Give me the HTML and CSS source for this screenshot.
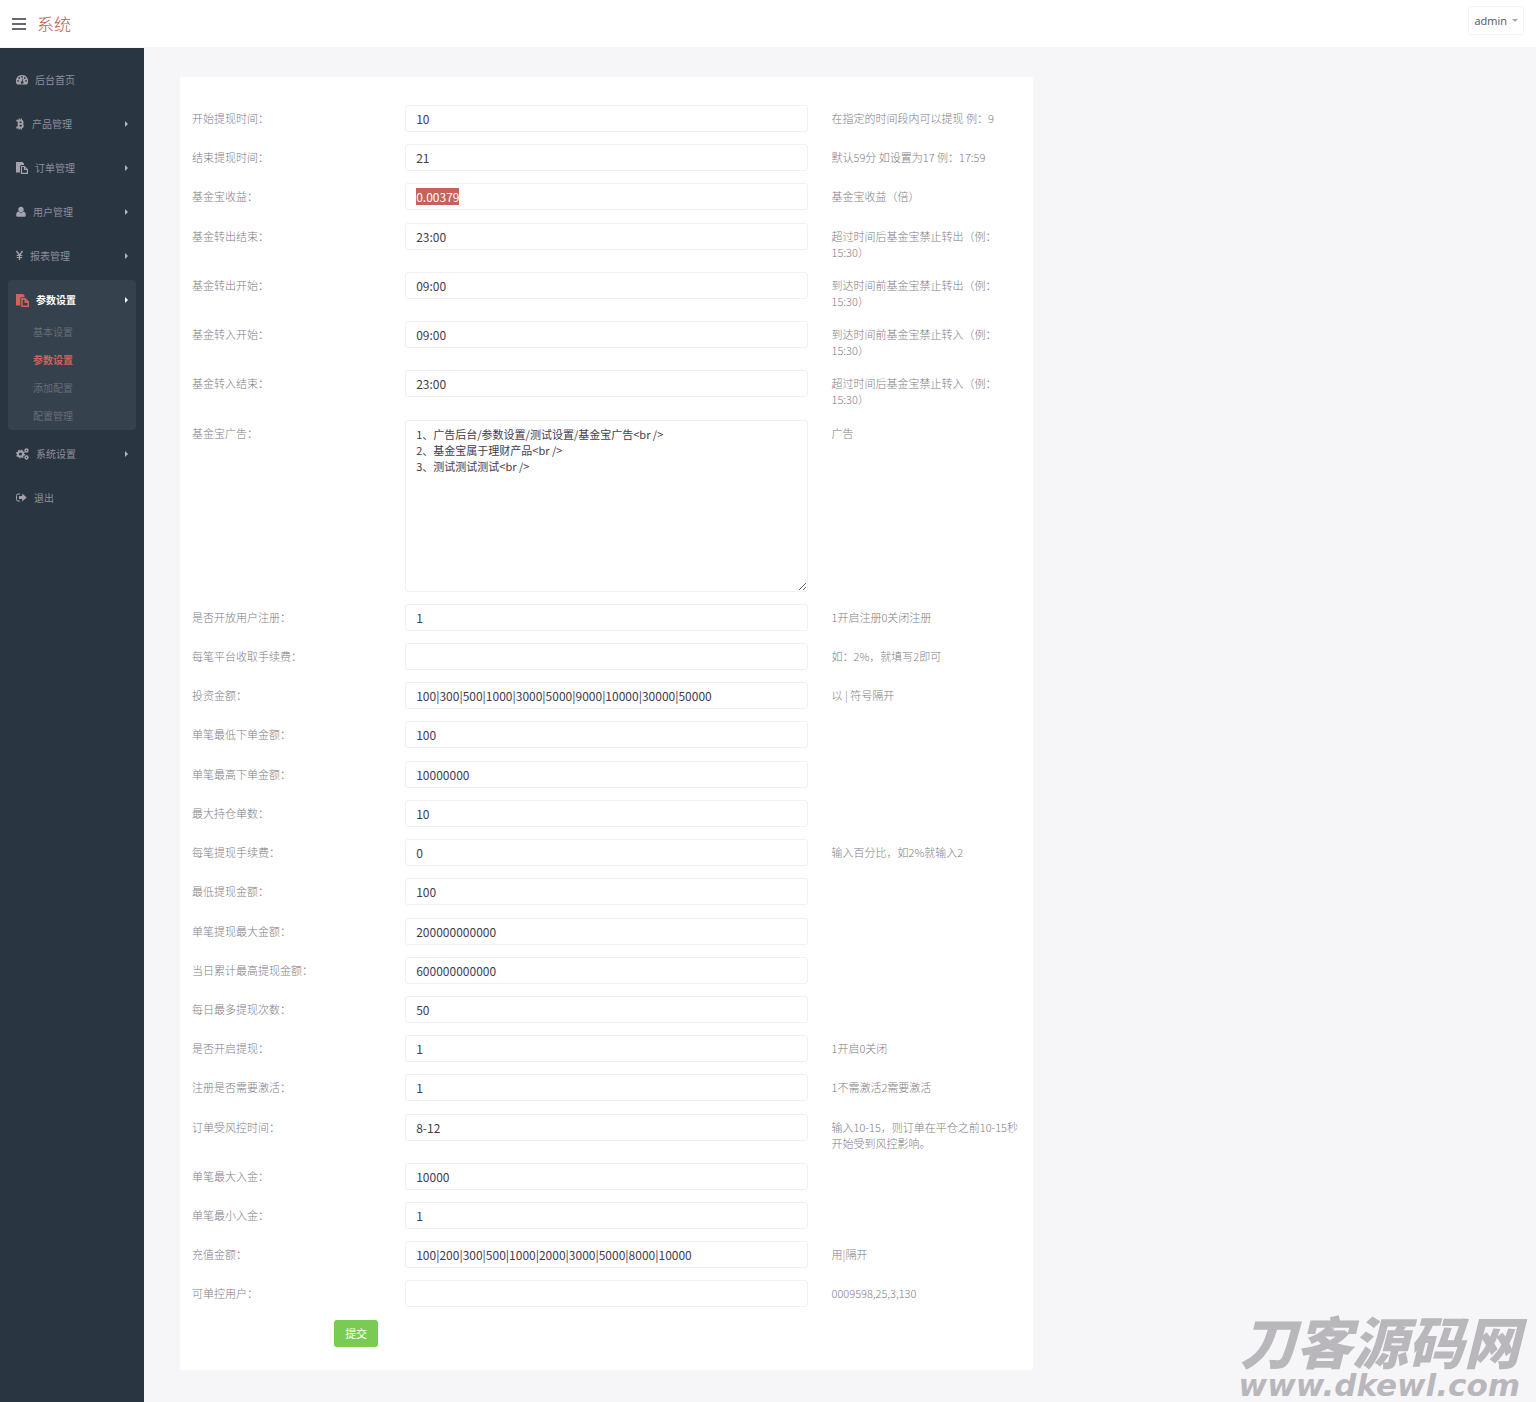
FILE: index.html
```html
<!DOCTYPE html>
<html lang="zh-CN">
<head>
    <meta charset="UTF-8">
    <meta name="viewport" content="width=device-width, initial-scale=1.0">
    <title>参数设置</title>
    <link rel="stylesheet" href="styles.css">
</head>
<body>
    <header class="header">
        <button class="menu-toggle" type="button" aria-label="菜单">
            <svg width="14" height="12" viewBox="0 0 14 12"><path d="M0 1h14M0 6h14M0 11h14" stroke="currentColor" stroke-width="2"/></svg>
        </button>
        <a class="logo" href="#">系统</a>
        <button class="user-menu" type="button">admin <span class="caret-down"></span></button>
    </header>

    <div class="layout">
        <nav class="sidebar">
            <ul class="menu">
                <li class="menu-item">
                    <a href="#">
                        <svg width="12" height="12" viewBox="0 0 12 12"><path fill="currentColor" fill-rule="evenodd" d="M6 1a6 6 0 0 0-5 9.500h10A6 6 0 0 0 6 1zM2 6a.8.8 0 1 1 0 1.700.8.8 0 0 1 0-1.700zM3.300 3.100a.8.8 0 1 1 0 1.700.8.8 0 0 1 0-1.700zM6 2a.8.8 0 1 1 0 1.700A.8.8 0 0 1 6 2zM8.800 3.100a.8.8 0 1 1 0 1.700.8.8 0 0 1 0-1.700zM10 6a.8.8 0 1 1 0 1.700A.8.8 0 0 1 10 6zM6.600 4.500l.7.2-.6 2.600a1.300 1.300 0 1 1-.8-.1z"/></svg>
                        后台首页
                    </a>
                </li>
                <li class="menu-item">
                    <a href="#">
                        <svg width="9" height="12" viewBox="0 0 9 12"><path fill="none" stroke="currentColor" stroke-width="1.8" d="M.3 2.600H5a1.600 1.600 0 0 1 0 3.300H2.600M5 5.900a1.800 1.800 0 0 1 0 3.600H.3M2.600 2.500v7"/><path stroke="currentColor" stroke-width="1.200" d="M3.300 .5v2M5.400 .5v2M3.300 9.500v2M5.400 9.500v2"/></svg>
                        产品管理
                        <span class="arrow"></span>
                    </a>
                </li>
                <li class="menu-item">
                    <a href="#">
                        <svg width="12" height="12" viewBox="0 0 12 12"><path fill="currentColor" d="M0 0h6.500L8 1.500V3H5.500A1.500 1.500 0 0 0 4 4.500v6H0z"/><path fill="none" stroke="currentColor" stroke-width="1.200" d="M5.500 4.500h3l2.900 2.900v4H5.500zM8.500 4.500v3h3"/></svg>
                        订单管理
                        <span class="arrow"></span>
                    </a>
                </li>
                <li class="menu-item">
                    <a href="#">
                        <svg width="10" height="12" viewBox="0 0 10 12"><circle cx="5" cy="3.500" r="2.700" fill="currentColor"/><path fill="currentColor" d="M2.400 5.500C.7 5.700.2 7.300.2 9.200c0 1 .6 1.600 1.500 1.600h6.600c.9 0 1.500-.6 1.500-1.600 0-1.900-.5-3.500-2.200-3.700a3.500 3.500 0 0 1-5.200 0z"/></svg>
                        用户管理
                        <span class="arrow"></span>
                    </a>
                </li>
                <li class="menu-item">
                    <a href="#">
                        <svg width="7" height="12" viewBox="0 0 7 12"><path fill="none" stroke="currentColor" stroke-width="1.400" d="M.5 1l3 4.500L6.500 1M3.500 5.500V10"/><path stroke="currentColor" d="M.7 5.500h5.600M.7 7.500h5.600"/></svg>
                        报表管理
                        <span class="arrow"></span>
                    </a>
                </li>
                <li class="menu-item active">
                    <a href="#">
                        <svg width="13" height="13" viewBox="0 0 12 12"><path fill="currentColor" d="M0 0h6.500L8 1.500V3H5.500A1.500 1.500 0 0 0 4 4.500v6H0z"/><path fill="none" stroke="currentColor" stroke-width="1.400" d="M5.500 4.500h3l2.800 2.800v4H5.500zM8.500 4.500v3h3"/></svg>
                        参数设置
                        <span class="arrow"></span>
                    </a>
                    <ul class="submenu">
                        <li><a href="#">基本设置</a></li>
                        <li><a class="current" href="#">参数设置</a></li>
                        <li><a href="#">添加配置</a></li>
                        <li><a href="#">配置管理</a></li>
                    </ul>
                </li>
                <li class="menu-item">
                    <a href="#">
                        <svg width="13" height="12" viewBox="0 0 13 12"><circle cx="4.500" cy="6" r="2.600" fill="none" stroke="currentColor" stroke-width="2"/><circle cx="4.500" cy="6" r="3.900" fill="none" stroke="currentColor" stroke-width="1.200" stroke-dasharray="1.600 1.460"/><circle cx="10.500" cy="2.500" r="1.400" fill="none" stroke="currentColor" stroke-width="1.500"/><circle cx="10.500" cy="9.500" r="1.400" fill="none" stroke="currentColor" stroke-width="1.500"/></svg>
                        系统设置
                        <span class="arrow"></span>
                    </a>
                </li>
                <li class="menu-item">
                    <a href="#">
                        <svg width="11" height="12" viewBox="0 0 11 12"><path fill="none" stroke="currentColor" d="M4 2H2A1.500 1.500 0 0 0 .5 3.500v4A1.500 1.500 0 0 0 2 9h2"/><path fill="currentColor" d="M3 4h3.200V1.500l4.500 4-4.500 4V7H3z"/></svg>
                        退出
                    </a>
                </li>
            </ul>
        </nav>

        <main class="content">
            <form class="card">
                <div class="form-row">
                    <label for="start-time">开始提现时间：</label>
                    <div class="field"><input type="text" id="start-time" value="10"></div>
                    <p class="hint">在指定的时间段内可以提现 例：9</p>
                </div>
                <div class="form-row">
                    <label for="end-time">结束提现时间：</label>
                    <div class="field"><input type="text" id="end-time" value="21"></div>
                    <p class="hint">默认59分 如设置为17 例：17:59</p>
                </div>
                <div class="form-row">
                    <label for="fund-rate">基金宝收益：</label>
                    <div class="field"><input type="text" id="fund-rate" value="0.00379"></div>
                    <p class="hint">基金宝收益（倍）</p>
                </div>
                <div class="form-row">
                    <label for="out-end">基金转出结束：</label>
                    <div class="field"><input type="text" id="out-end" value="23:00"></div>
                    <p class="hint">超过时间后基金宝禁止转出（例：15:30）</p>
                </div>
                <div class="form-row">
                    <label for="out-start">基金转出开始：</label>
                    <div class="field"><input type="text" id="out-start" value="09:00"></div>
                    <p class="hint">到达时间前基金宝禁止转出（例：15:30）</p>
                </div>
                <div class="form-row">
                    <label for="in-start">基金转入开始：</label>
                    <div class="field"><input type="text" id="in-start" value="09:00"></div>
                    <p class="hint">到达时间前基金宝禁止转入（例：15:30）</p>
                </div>
                <div class="form-row">
                    <label for="in-end">基金转入结束：</label>
                    <div class="field"><input type="text" id="in-end" value="23:00"></div>
                    <p class="hint">超过时间后基金宝禁止转入（例：15:30）</p>
                </div>
                <div class="form-row">
                    <label for="fund-ad">基金宝广告：</label>
                    <div class="field"><textarea id="fund-ad">1、广告后台/参数设置/测试设置/基金宝广告&lt;br /&gt;
2、基金宝属于理财产品&lt;br /&gt;
3、测试测试测试&lt;br /&gt;</textarea></div>
                    <p class="hint">广告</p>
                </div>
                <div class="form-row">
                    <label for="reg-open">是否开放用户注册：</label>
                    <div class="field"><input type="text" id="reg-open" value="1"></div>
                    <p class="hint">1开启注册0关闭注册</p>
                </div>
                <div class="form-row">
                    <label for="order-fee">每笔平台收取手续费：</label>
                    <div class="field"><input type="text" id="order-fee" value=""></div>
                    <p class="hint">如：2%，就填写2即可</p>
                </div>
                <div class="form-row">
                    <label for="invest">投资金额：</label>
                    <div class="field"><input type="text" id="invest" value="100|300|500|1000|3000|5000|9000|10000|30000|50000"></div>
                    <p class="hint">以 | 符号隔开</p>
                </div>
                <div class="form-row">
                    <label for="order-min">单笔最低下单金额：</label>
                    <div class="field"><input type="text" id="order-min" value="100"></div>
                </div>
                <div class="form-row">
                    <label for="order-max">单笔最高下单金额：</label>
                    <div class="field"><input type="text" id="order-max" value="10000000"></div>
                </div>
                <div class="form-row">
                    <label for="hold-max">最大持仓单数：</label>
                    <div class="field"><input type="text" id="hold-max" value="10"></div>
                </div>
                <div class="form-row">
                    <label for="cash-fee">每笔提现手续费：</label>
                    <div class="field"><input type="text" id="cash-fee" value="0"></div>
                    <p class="hint">输入百分比，如2%就输入2</p>
                </div>
                <div class="form-row">
                    <label for="cash-min">最低提现金额：</label>
                    <div class="field"><input type="text" id="cash-min" value="100"></div>
                </div>
                <div class="form-row">
                    <label for="cash-max">单笔提现最大金额：</label>
                    <div class="field"><input type="text" id="cash-max" value="200000000000"></div>
                </div>
                <div class="form-row">
                    <label for="day-max">当日累计最高提现金额：</label>
                    <div class="field"><input type="text" id="day-max" value="600000000000"></div>
                </div>
                <div class="form-row">
                    <label for="day-count">每日最多提现次数：</label>
                    <div class="field"><input type="text" id="day-count" value="50"></div>
                </div>
                <div class="form-row">
                    <label for="cash-open">是否开启提现：</label>
                    <div class="field"><input type="text" id="cash-open" value="1"></div>
                    <p class="hint">1开启0关闭</p>
                </div>
                <div class="form-row">
                    <label for="reg-active">注册是否需要激活：</label>
                    <div class="field"><input type="text" id="reg-active" value="1"></div>
                    <p class="hint">1不需激活2需要激活</p>
                </div>
                <div class="form-row">
                    <label for="risk-time">订单受风控时间：</label>
                    <div class="field"><input type="text" id="risk-time" value="8-12"></div>
                    <p class="hint">输入10-15，则订单在平仓之前10-15秒开始受到风控影响。</p>
                </div>
                <div class="form-row">
                    <label for="pay-max">单笔最大入金：</label>
                    <div class="field"><input type="text" id="pay-max" value="10000"></div>
                </div>
                <div class="form-row">
                    <label for="pay-min">单笔最小入金：</label>
                    <div class="field"><input type="text" id="pay-min" value="1"></div>
                </div>
                <div class="form-row">
                    <label for="recharge">充值金额：</label>
                    <div class="field"><input type="text" id="recharge" value="100|200|300|500|1000|2000|3000|5000|8000|10000"></div>
                    <p class="hint">用|隔开</p>
                </div>
                <div class="form-row">
                    <label for="ctrl-user">可单控用户：</label>
                    <div class="field"><input type="text" id="ctrl-user" value=""></div>
                    <p class="hint">0009598,25,3,130</p>
                </div>
                <button class="btn-submit" type="submit">提交</button>
            </form>
        </main>
    </div>

    <div class="watermark">
        <div class="watermark-name">刀客源码网</div>
        <div class="watermark-url">www.dkewl.com</div>
    </div>

    <script>
        document.getElementById('fund-rate').select();
    </script>
</body>
</html>
```

FILE: styles.css
```css
* { box-sizing: border-box; }
body { margin: 0; min-height: 100vh; display: flex; flex-direction: column; position: relative; background: #f6f5f8; font-family: "Noto Sans CJK SC", sans-serif; font-size: 11px; line-height: 16px; color: #7f7c86; }
ul { list-style: none; margin: 0; padding: 0; }
a { text-decoration: none; color: inherit; }
button, input, textarea { font-family: inherit; }
::selection { background: #c5635b; color: #fff; }

/* header */
.header { display: flex; align-items: center; height: 48px; padding: 0 12px; background: #fff; border-bottom: 1px solid #f6f5f8; }
.menu-toggle { display: flex; padding: 0; border: none; background: none; color: #6b6874; cursor: pointer; }
.logo { margin-left: 11px; font-size: 17px; line-height: 24px; font-weight: 300; color: #b85a48; }
.user-menu { display: flex; align-items: center; gap: 5px; height: 29px; margin: 0 0 7px auto; padding: 0 5px; border: 1px solid #f4f4f7; border-radius: 3px; background: #fff; color: #55536a; font-family: "Open Sans", sans-serif; font-size: 11px; cursor: pointer; }
.caret-down { border: 3px solid transparent; border-top-color: #a5a5ab; border-bottom: 0; }

/* sidebar */
.layout { flex: 1; display: flex; }
.sidebar { width: 144px; flex-shrink: 0; padding: 12px 8px; background: #293541; color: #8f8e9d; font-size: 10px; }
.sidebar svg { color: #a3a3ab; }
.menu { display: flex; flex-direction: column; gap: 4px; }
.menu-item > a { display: flex; align-items: center; gap: 7px; height: 40px; padding: 0 8px; }
.arrow { margin-left: auto; border: 3px solid transparent; border-left-color: #b5b6bc; border-right: 0; }
.active { background: #35414d; border-radius: 4px; }
.active > a { color: #fff; font-weight: 700; }
.sidebar .active svg { color: #cd655c; }
.active .arrow { border-left-color: #fff; }
.submenu { margin-top: -2px; }
.submenu a { display: block; padding: 6px 25px; color: #696d76; }
.submenu .current { color: #cd655c; font-weight: 700; }

/* form */
.content { flex: 1; display: flex; padding: 29px 44px 32px 36px; }
.card { width: 65%; display: flex; flex-direction: column; justify-content: space-between; padding: 28px 0 23px; background: #fff; border-radius: 2px; }
.form-row { display: grid; grid-template-columns: 1fr 2fr 1fr; align-items: start; }
.form-row label, .hint { margin: 0; padding: 5px 12px 0; font-weight: 300; }
.field { padding: 0 12px; }
input, textarea { display: block; width: 100%; border: 1px solid #f1f1f4; border-radius: 3px; background: #fff; color: #3f3d4f; outline: none; }
input { height: 27px; padding: 0 10px; font-size: 12px; }
textarea { height: 172px; padding: 5px 10px; font-size: 11px; line-height: 16px; resize: vertical; }
.btn-submit { align-self: flex-start; height: 27px; margin-left: calc(100% / 6 + 12px); padding: 0 11px; border: none; border-radius: 3px; background: #7acb53; color: #fff; font-size: 11px; cursor: pointer; }

/* watermark */
.watermark { position: absolute; right: 16px; bottom: 0; color: #b9b7bc; font-weight: 900; font-style: italic; text-align: right; pointer-events: none; }
.watermark-name { font-size: 56px; line-height: 56px; }
.watermark-url { font-family: "DejaVu Sans", sans-serif; font-size: 31px; line-height: 34px; }
```
